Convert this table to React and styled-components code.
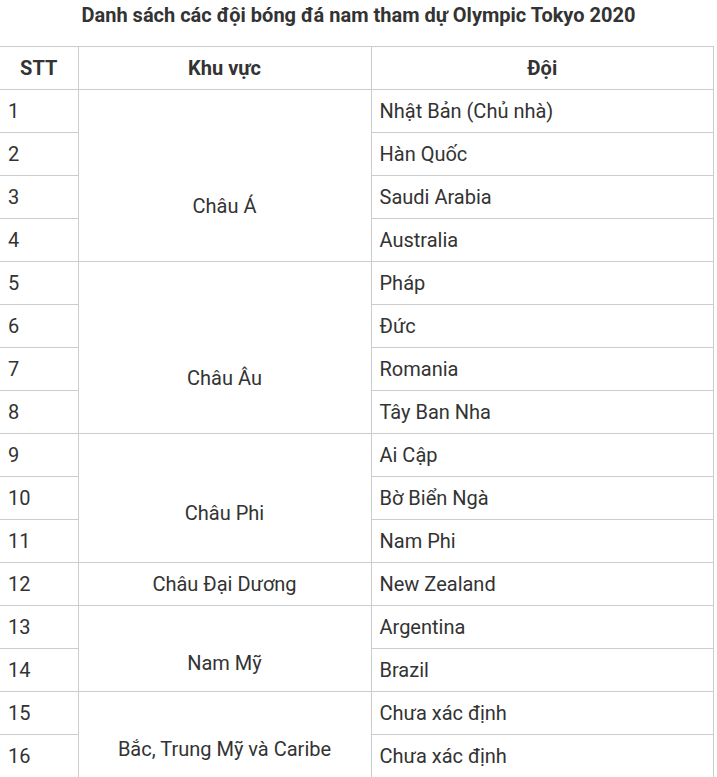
import styled, { createGlobalStyle } from 'styled-components'

const GlobalStyle = createGlobalStyle`
  html, body {
    margin: 0;
    padding: 0;
    background: #fff;
  }
  body {
    font-family: Roboto, "Liberation Sans", Arial, sans-serif;
    color: #333;
  }
`

// shift = extra top space in the merged cell, the source page pushes the label down
const regions = [
  { name: 'Châu Á', shift: 60, teams: ['Nhật Bản (Chủ nhà)', 'Hàn Quốc', 'Saudi Arabia', 'Australia'] },
  { name: 'Châu Âu', shift: 60, teams: ['Pháp', 'Đức', 'Romania', 'Tây Ban Nha'] },
  { name: 'Châu Phi', shift: 29, teams: ['Ai Cập', 'Bờ Biển Ngà', 'Nam Phi'] },
  { name: 'Châu Đại Dương', shift: 0, teams: ['New Zealand'] },
  { name: 'Nam Mỹ', shift: 28, teams: ['Argentina', 'Brazil'] },
  { name: 'Bắc, Trung Mỹ và Caribe', shift: 28, teams: ['Chưa xác định', 'Chưa xác định'] },
]

const Page = styled.div`
  width: 717px;
`

const Caption = styled.h3`
  margin: 0;
  padding-top: 2px;
  height: 44px;
  text-align: center;
  font-size: 20px;
  font-weight: 700;
  line-height: 26px;
  color: #333;
`

const Table = styled.table`
  width: 714px;
  border-collapse: collapse;
  table-layout: fixed;
  font-size: 20px;
`

const Th = styled.th`
  height: 42px;
  padding: 0 8px;
  border: 1px solid #ccc;
  font-weight: 700;
  text-align: center;
  &:first-child {
    border-left: none;
  }
`

const Td = styled.td`
  height: 42px;
  padding: ${p => p.$shift || 0}px 8px 0;
  border: 1px solid #ccc;
  text-align: ${p => (p.$center ? 'center' : 'left')};
  vertical-align: middle;
  line-height: 24px;
  &:first-child {
    border-left: none;
  }
`

const App = () => {
  let n = 0
  return (
    <>
      <GlobalStyle />
      <Page>
        <Caption>Danh sách các đội bóng đá nam tham dự Olympic Tokyo 2020</Caption>
        <Table>
          <colgroup>
            <col style={{ width: 78 }} />
            <col style={{ width: 293 }} />
            <col />
          </colgroup>
          <thead>
            <tr>
              <Th>STT</Th>
              <Th>Khu vực</Th>
              <Th>Đội</Th>
            </tr>
          </thead>
          <tbody>
            {regions.map(r =>
              r.teams.map((team, i) => {
                n += 1
                return (
                  <tr key={n}>
                    <Td>{n}</Td>
                    {i === 0 && (
                      <Td $center $shift={r.shift} rowSpan={r.teams.length}>
                        {r.name}
                      </Td>
                    )}
                    <Td>{team}</Td>
                  </tr>
                )
              })
            )}
          </tbody>
        </Table>
      </Page>
    </>
  )
}

export default App
